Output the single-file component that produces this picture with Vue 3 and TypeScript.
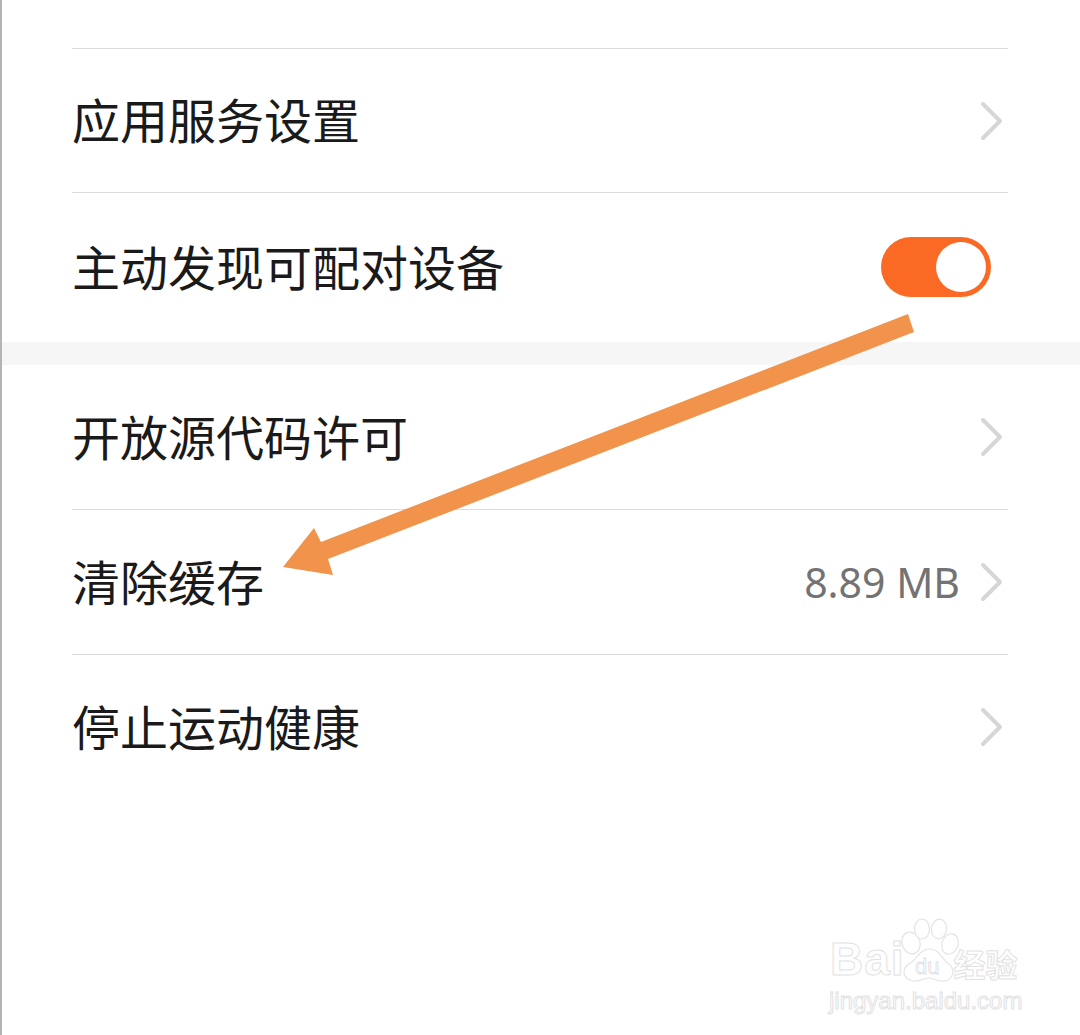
<script setup lang="ts">
interface Row {
  label: string
  value?: string
  toggle?: boolean
}

const firstGroup: Row[] = [
  { label: '应用服务设置' },
  { label: '主动发现可配对设备', toggle: true },
]

const secondGroup: Row[] = [
  { label: '开放源代码许可' },
  { label: '清除缓存', value: '8.89 MB' },
  { label: '停止运动健康' },
]
</script>

<template>
  <div class="page">
    <section class="group first">
      <div v-for="row in firstGroup" :key="row.label" class="row" :class="{ tall: row.toggle }">
        <span class="label">{{ row.label }}</span>
        <span v-if="row.toggle" class="switch"><i class="knob"></i></span>
        <svg v-else class="chevron" viewBox="0 0 24 40" width="24" height="40">
          <path d="M3 3 L20 20 L3 37" fill="none" stroke="#d6d6d6" stroke-width="4" stroke-linecap="round" stroke-linejoin="round" />
        </svg>
      </div>
    </section>

    <div class="band"></div>

    <section class="group">
      <div v-for="row in secondGroup" :key="row.label" class="row">
        <span class="label">{{ row.label }}</span>
        <span v-if="row.value" class="value">{{ row.value }}</span>
        <svg class="chevron" viewBox="0 0 24 40" width="24" height="40">
          <path d="M3 3 L20 20 L3 37" fill="none" stroke="#d6d6d6" stroke-width="4" stroke-linecap="round" stroke-linejoin="round" />
        </svg>
      </div>
    </section>

    <!-- annotation drawn over the screenshot -->
    <svg class="arrow" viewBox="0 0 1080 1035" width="1080" height="1035">
      <polygon points="908,314 914,332 328,559 333,575 283,567 314,528 321,542" fill="#f1934a" />
    </svg>

    <div class="watermark">
      <div class="wm-top">
        <span class="wm-bai">Bai</span>
        <svg class="wm-paw" viewBox="0 0 64 68" width="64" height="68">
          <g fill="#fff" stroke="#e4e4e4" stroke-width="1.2">
            <ellipse cx="15" cy="25" rx="9" ry="11" transform="rotate(-20 15 25)" />
            <ellipse cx="26" cy="11" rx="7.5" ry="10" />
            <ellipse cx="43" cy="11" rx="7.5" ry="10" transform="rotate(8 43 11)" />
            <ellipse cx="54" cy="26" rx="8" ry="10.5" transform="rotate(20 54 26)" />
            <path d="M34 31 C44 31 46 42 54 47 C60 53 56 64 46 63 C40 63 37 60 33 60 C28 60 24 64 17 63 C7 61 5 51 13 46 C22 41 23 31 34 31 Z" />
          </g>
          <text x="19" y="56" class="wm-du">du</text>
        </svg>
        <span class="wm-cn">经验</span>
      </div>
      <div class="wm-url">jingyan.baidu.com</div>
    </div>
  </div>
</template>

<style scoped>
.page {
  position: relative;
  width: 1080px;
  height: 1035px;
  box-sizing: border-box;
  padding-top: 48px;
  overflow: hidden;
  background: #fff;
  border-left: 2px solid #b4b4b4;
  font-family: "Noto Sans CJK SC", "Noto Sans", sans-serif;
}
.group {
  margin: 0 72px 0 70px;
  border-top: 1px solid #dcdcdc;
}
.group:not(.first) {
  border-top: 0;
}
.row {
  display: flex;
  align-items: center;
  height: 144px;
  box-sizing: border-box;
  border-top: 1px solid #dcdcdc;
}
.row:first-child {
  height: 143px;
  border-top: 0;
}
.group:not(.first) .row {
  height: 145px;
}
.group:not(.first) .row:first-child {
  height: 144px;
}
.row.tall {
  height: 150px;
}
.label {
  font-size: 48px;
  line-height: 60px;
  color: #1a1a1a;
  flex: 1;
  padding-bottom: 4px;
}
.first .row:first-child .label,
.row.tall .label {
  padding-bottom: 6px;
}
.value {
  font-family: "Noto Sans", sans-serif;
  font-size: 41px;
  color: #737373;
  margin-right: 20px;
}
.chevron {
  flex: none;
  margin-right: 4px;
}
.switch {
  position: relative;
  display: block;
  width: 110px;
  height: 60px;
  margin-right: 17px;
  margin-top: -2px;
  border-radius: 30px;
  background: #fb6a25;
}
.knob {
  position: absolute;
  top: 5px;
  right: 5px;
  width: 50px;
  height: 50px;
  border-radius: 50%;
  background: #fff;
}
.band {
  height: 23px;
  background: #f6f6f7;
  margin-left: -2px;
}
.arrow {
  position: absolute;
  left: -2px;
  top: 0;
}
.watermark {
  position: absolute;
  left: 826px;
  top: 920px;
  width: 200px;
  font-family: "Liberation Sans", sans-serif;
  color: #fff;
  -webkit-text-stroke: 1px #e2e2e2;
}
.wm-top {
  display: flex;
  align-items: flex-end;
  height: 64px;
}
.wm-bai {
  font-size: 46px;
  font-weight: 700;
  line-height: 50px;
  letter-spacing: 1px;
  margin-left: 2px;
}
.wm-paw {
  margin-left: -9px;
  margin-bottom: -2px;
}
.wm-du {
  font-family: "Liberation Sans", sans-serif;
  font-size: 22px;
  fill: #fff;
  stroke: #dedede;
  stroke-width: 0.8;
}
.wm-cn {
  font-family: "Noto Sans CJK SC", sans-serif;
  font-size: 32px;
  font-weight: 700;
  line-height: 42px;
  margin-left: -6px;
}
.wm-url {
  font-size: 24px;
  line-height: 30px;
  margin-top: 2px;
  margin-left: 1px;
  white-space: nowrap;
}
</style>

<style>
html, body { margin: 0; background: #fff; }
</style>
